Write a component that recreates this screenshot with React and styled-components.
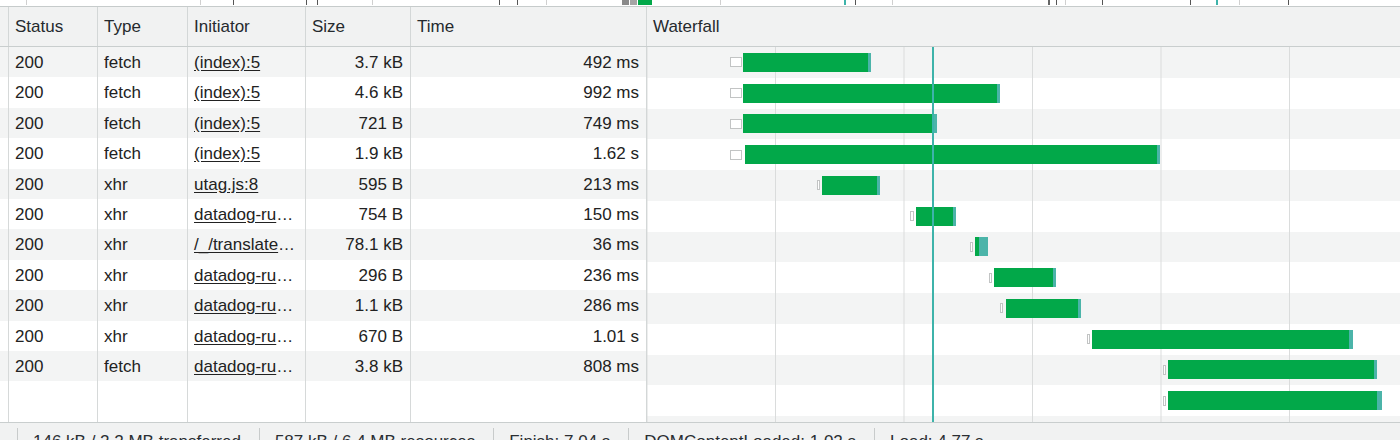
import React from "react";
import styled, { createGlobalStyle } from "styled-components";

const GlobalStyle = createGlobalStyle`
  html, body {
    margin: 0;
    padding: 0;
    background: #fff;
    overflow: hidden;
  }
  body {
    font-family: "Liberation Sans", Arial, Helvetica, sans-serif;
    font-size: 17px;
    color: #222;
  }
`;

const COLS = "8px 89px 90px 118px 105px 236px";
const WF_LEFT = 647;

const Page = styled.div`
  width: 1400px;
  height: 440px;
  overflow: hidden;
  display: flex;
  flex-direction: column;
`;

const Overview = styled.div`
  position: relative;
  flex: none;
  height: 6px;
  background: #fff;
  border-bottom: 1px solid #c6cbcb;
`;

const Tick = styled.span`
  position: absolute;
  top: 0;
  height: 5px;
  background: ${(p) => p.$color};
`;

const Header = styled.div`
  flex: none;
  display: grid;
  grid-template-columns: ${COLS} 1fr;
  height: 39px;
  background: #f1f2f2;
  border-bottom: 1px solid #c9cece;
`;

const HeadCell = styled.div`
  padding: 1px 0 0 6px;
  line-height: 38px;
  color: #252a2e;
  white-space: nowrap;
  & + & {
    border-left: 1px solid #d3d7d7;
  }
`;

const Body = styled.div`
  flex: none;
  display: flex;
  height: 375px;
  border-bottom: 1px solid #c9cece;
  overflow: hidden;
`;

const Table = styled.div`
  flex: none;
  width: 646px;
  display: flex;
  flex-direction: column;
`;

const Row = styled.div`
  flex: none;
  display: grid;
  grid-template-columns: ${COLS};
  height: 30.4px;
  background: ${(p) => (p.$odd ? "#f3f4f4" : "#fff")};
`;

const Filler = styled.div`
  flex: 1;
  display: grid;
  grid-template-columns: ${COLS};
  background: #fff;
`;

const Cell = styled.div`
  min-width: 0;
  padding: 1px 7px 0 6px;
  line-height: 29.4px;
  white-space: nowrap;
  overflow: hidden;
  text-overflow: ellipsis;
  text-align: ${(p) => (p.$right ? "right" : "left")};
  & + & {
    border-left: 1px solid #d6d9d9;
  }
`;

const Link = styled.span`
  text-decoration: underline;
  text-underline-offset: 2px;
`;

const Waterfall = styled.div`
  position: relative;
  flex: 1;
  display: flex;
  flex-direction: column;
  border-left: 1px solid #d3d7d7;
`;

const WfRow = styled.div`
  position: relative;
  flex: none;
  height: 30.75px;
  background-color: ${(p) => (p.$odd ? "#f3f4f4" : "#fff")};
  background-image: linear-gradient(to right, #dadcdc 0, #dadcdc 1px, transparent 1px);
  background-size: 128.5px 100%;
  background-position: 128px 0;
`;

const DclLine = styled.div`
  position: absolute;
  top: 0;
  bottom: 0;
  left: 285px;
  width: 2px;
  background: #3db3aa;
`;

const Queue = styled.span`
  position: absolute;
  top: calc(50% - 5px);
  height: 10px;
  box-sizing: border-box;
  background: #fff;
  border: 1px solid #c2c4c4;
`;

const Bar = styled.div`
  position: absolute;
  top: calc(50% - 9.5px);
  height: 19px;
  display: flex;
`;

const Download = styled.span`
  flex: 1;
  background: #02a849;
`;

const Cap = styled.span`
  flex: none;
  background: #4bb4a9;
`;

const StatusBar = styled.div`
  flex: 1;
  display: flex;
  padding: 5px 0 0 17px;
  background: #f1f2f2;
`;

const StatusItem = styled.div`
  height: 30px;
  padding: 0 18px 0 15px;
  line-height: 28px;
  white-space: nowrap;
  color: #2a2e32;
  border-left: 1px solid #c8cbcb;
`;

const ticks = [
  [26, 1, "#d0d0d0"], [200, 1, "#d0d0d0"], [233, 1, "#555"], [306, 1, "#555"],
  [317, 1, "#555"], [372, 1, "#d0d0d0"], [499, 1, "#555"], [517, 1, "#555"],
  [546, 1, "#d0d0d0"], [622, 7, "#8a8a8a"], [630, 7, "#a5a5a5"], [638, 14, "#02a849"],
  [720, 1, "#d0d0d0"], [844, 2, "#3db3aa"], [855, 1, "#555"], [892, 1, "#d0d0d0"],
  [1048, 2, "#666"], [1056, 1, "#555"], [1065, 1, "#d0d0d0"], [1102, 1, "#555"],
  [1190, 1, "#555"], [1216, 2, "#3db3aa"], [1239, 1, "#d0d0d0"], [1288, 1, "#555"],
];

const requests = [
  { type: "fetch", initiator: "(index):5", size: "3.7 kB", time: "492 ms" },
  { type: "fetch", initiator: "(index):5", size: "4.6 kB", time: "992 ms" },
  { type: "fetch", initiator: "(index):5", size: "721 B", time: "749 ms" },
  { type: "fetch", initiator: "(index):5", size: "1.9 kB", time: "1.62 s" },
  { type: "xhr", initiator: "utag.js:8", size: "595 B", time: "213 ms" },
  { type: "xhr", initiator: "datadog-rum.js:1", size: "754 B", time: "150 ms" },
  { type: "xhr", initiator: "/_/translate_http/_/rpc", size: "78.1 kB", time: "36 ms" },
  { type: "xhr", initiator: "datadog-rum.js:1", size: "296 B", time: "236 ms" },
  { type: "xhr", initiator: "datadog-rum.js:1", size: "1.1 kB", time: "286 ms" },
  { type: "xhr", initiator: "datadog-rum.js:1", size: "670 B", time: "1.01 s" },
  { type: "fetch", initiator: "datadog-rum.js:1", size: "3.8 kB", time: "808 ms" },
];

// queue box [from, to], download bar [from, to], end of the teal cap
const timings = [
  { q: [730, 742], bar: [743, 868], end: 871 },
  { q: [730, 742], bar: [743, 997], end: 1000 },
  { q: [730, 742], bar: [743, 934], end: 937 },
  { q: [730, 742], bar: [745, 1157], end: 1160 },
  { q: [817, 820], bar: [822, 877], end: 880 },
  { q: [910, 914], bar: [916, 953], end: 956 },
  { q: [970, 973], bar: [975, 979], end: 988 },
  { q: [989, 992], bar: [994, 1053], end: 1056 },
  { q: [1000, 1003], bar: [1006, 1078], end: 1081 },
  { q: [1087, 1090], bar: [1092, 1349], end: 1353 },
  { q: [1163, 1166], bar: [1168, 1374], end: 1377 },
  { q: [1163, 1166], bar: [1168, 1377], end: 1382 },
  { q: [1172, 1175], bar: [1177, 1380], end: 1384 },
];

const columns = ["", "Status", "Type", "Initiator", "Size", "Time", "Waterfall"];

const WaterfallRow = ({ odd, t }) => (
  <WfRow $odd={odd}>
    <Queue style={{ left: t.q[0] - WF_LEFT, width: t.q[1] - t.q[0] }} />
    <Bar style={{ left: t.bar[0] - WF_LEFT, width: t.end - t.bar[0] }}>
      <Download />
      <Cap style={{ width: t.end - t.bar[1] }} />
    </Bar>
  </WfRow>
);

const App = () => (
  <Page>
    <GlobalStyle />
    <Overview>
      {ticks.map(([x, w, c], i) => (
        <Tick key={i} $color={c} style={{ left: x, width: w }} />
      ))}
    </Overview>
    <Header>
      {columns.map((c, i) => (
        <HeadCell key={i}>{c}</HeadCell>
      ))}
    </Header>
    <Body>
      <Table>
        {requests.map((r, i) => (
          <Row key={i} $odd={i % 2 === 0}>
            <Cell />
            <Cell>200</Cell>
            <Cell>{r.type}</Cell>
            <Cell>
              <Link>{r.initiator}</Link>
            </Cell>
            <Cell $right>{r.size}</Cell>
            <Cell $right>{r.time}</Cell>
          </Row>
        ))}
        <Filler>
          {columns.slice(0, 6).map((c, i) => (
            <Cell key={i} />
          ))}
        </Filler>
      </Table>
      <Waterfall>
        {timings.map((t, i) => (
          <WaterfallRow key={i} odd={i % 2 === 0} t={t} />
        ))}
        <DclLine />
      </Waterfall>
    </Body>
    <StatusBar>
      <StatusItem>146 kB / 2.2 MB transferred</StatusItem>
      <StatusItem>587 kB / 6.4 MB resources</StatusItem>
      <StatusItem>Finish: 7.04 s</StatusItem>
      <StatusItem>DOMContentLoaded: 1.02 s</StatusItem>
      <StatusItem>Load: 4.77 s</StatusItem>
    </StatusBar>
  </Page>
);

export default App;
